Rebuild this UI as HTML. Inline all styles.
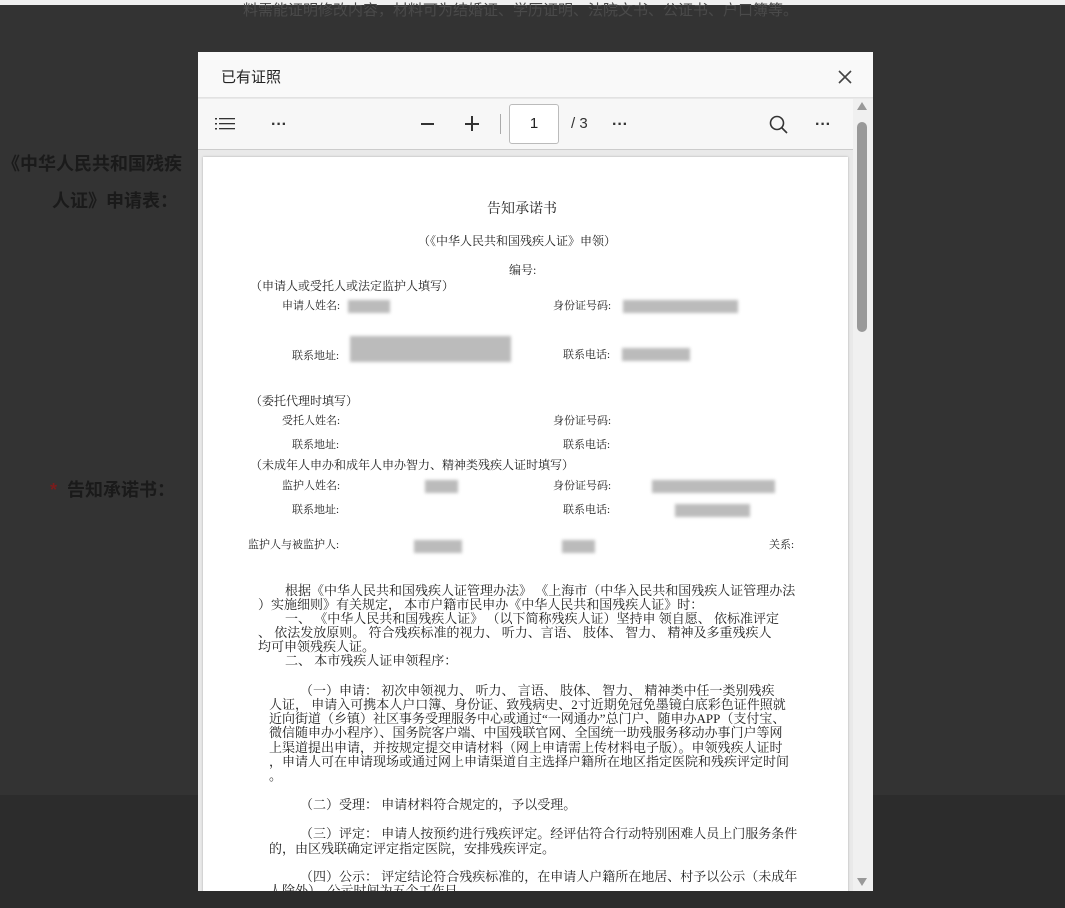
<!DOCTYPE html>
<html><head><meta charset="utf-8">
<style>
*{margin:0;padding:0;box-sizing:border-box}
body{width:1065px;height:908px;overflow:hidden;background:#333;font-family:"Liberation Sans","Noto Sans CJK SC",sans-serif;position:relative}
.a{position:absolute;white-space:nowrap}
.t{position:absolute;white-space:nowrap;font-family:"Liberation Serif","Noto Serif CJK SC",serif;font-size:13px;line-height:16px;color:#222}
.b{position:absolute;background:#bbb;filter:blur(1.5px)}
</style></head><body>
<div class="a" style="left:0;top:0;width:1065px;height:5px;background:#f0f0f0"></div>
<div class="a" style="left:0;top:795px;width:1065px;height:113px;background:#2c2c2c"></div>
<div class="a" style="left:243px;top:2px;font-size:15px;color:#4a4a4a;line-height:18px">料需能证明修改内容，材料可为结婚证、学历证明、法院文书、公证书、户口簿等。</div>
<div class="a" style="left:2px;top:150px;font-size:18px;font-weight:bold;color:#1a1a1a">《中华人民共和国残疾</div>
<div class="a" style="left:52px;top:187px;font-size:18px;font-weight:bold;color:#1a1a1a">人证》申请表：</div>
<div class="a" style="left:50px;top:476px;font-size:18px;font-weight:bold;color:#1a1a1a"><span style="color:#7a1c1c">*</span>&nbsp; 告知承诺书：</div>

<div class="a" style="left:198px;top:52px;width:675px;height:839px;background:#e9e9e9;overflow:hidden">
 <div class="a" style="left:0;top:0;width:675px;height:46px;background:#f9f9f9;border-bottom:1px solid #e2e2e2"></div>
 <div class="a" style="left:23px;top:14px;font-size:15px;color:#222">已有证照</div>
 <svg class="a" style="left:640px;top:18px" width="14" height="14"><path d="M1 1L13 13M13 1L1 13" stroke="#444" stroke-width="1.6"/></svg>
 <div class="a" style="left:0;top:47px;width:675px;height:51px;background:#f7f7f7;border-bottom:1px solid #ccc"></div>
 <svg class="a" style="left:17px;top:65px" width="22" height="14"><g fill="#333"><rect x="0" y="1" width="2" height="1.5"/><rect x="0" y="6" width="2" height="1.5"/><rect x="0" y="11" width="2" height="1.5"/><rect x="4" y="1" width="16" height="1.3"/><rect x="4" y="6" width="16" height="1.3"/><rect x="4" y="11" width="16" height="1.3"/></g></svg>
 <div class="a" style="left:73px;top:64px;font-size:16px;color:#333;font-weight:bold">···</div>
 <div class="a" style="left:223px;top:71px;width:13px;height:1.5px;background:#333"></div>
 <div class="a" style="left:267px;top:71px;width:14px;height:1.5px;background:#333"></div>
 <div class="a" style="left:273px;top:64px;width:1.5px;height:15px;background:#333"></div>
 <div class="a" style="left:302px;top:62px;width:1px;height:20px;background:#aaa"></div>
 <div class="a" style="left:311px;top:52px;width:50px;height:40px;border:1px solid #bbb;border-radius:3px;background:#fff;font-size:15px;text-align:center;line-height:38px;color:#222">1</div>
 <div class="a" style="left:373px;top:63px;font-size:15px;color:#333">/ 3</div>
 <div class="a" style="left:414px;top:64px;font-size:16px;color:#333;font-weight:bold">···</div>
 <svg class="a" style="left:571px;top:63px" width="20" height="20"><circle cx="8" cy="8" r="6.5" fill="none" stroke="#333" stroke-width="1.6"/><path d="M13 13L18 18" stroke="#333" stroke-width="1.6"/></svg>
 <div class="a" style="left:617px;top:64px;font-size:16px;color:#333;font-weight:bold">···</div>
 <div class="a" style="left:655px;top:47px;width:20px;height:792px;background:#f0f0f0"></div>
 <div class="a" style="left:659px;top:50px;width:0;height:0;border-left:5px solid transparent;border-right:5px solid transparent;border-bottom:8px solid #999"></div>
 <div class="a" style="left:659px;top:70px;width:10px;height:210px;background:#999;border-radius:5px"></div>
 <div class="a" style="left:659px;top:826px;width:0;height:0;border-left:5px solid transparent;border-right:5px solid transparent;border-top:8px solid #999"></div>
 <div class="a" style="left:5px;top:105px;width:645px;height:740px;background:#fff;box-shadow:0 0 2px #aaa"></div>
</div>

<div class="t" style="left:487px;top:202px;font-size:14px">告知承诺书</div>
<div class="t" style="left:418px;top:233px;font-size:12px">（《中华人民共和国残疾人证》申领）</div>
<div class="t" style="left:509px;top:262px;font-size:12px">编号:</div>
<div class="t" style="left:250px;top:278px;font-size:12px">（申请人或受托人或法定监护人填写）</div>
<div class="t" style="left:282px;top:298px;font-size:11px">申请人姓名:</div>
<div class="t" style="left:553px;top:298px;font-size:11px">身份证号码:</div>
<div class="b" style="left:348px;top:300px;width:42px;height:13px"></div>
<div class="b" style="left:623px;top:300px;width:115px;height:13px"></div>
<div class="t" style="left:292px;top:348px;font-size:11px">联系地址:</div>
<div class="t" style="left:563px;top:347px;font-size:11px">联系电话:</div>
<div class="b" style="left:350px;top:336px;width:161px;height:26px"></div>
<div class="b" style="left:622px;top:348px;width:68px;height:13px"></div>
<div class="t" style="left:250px;top:393px;font-size:12px">（委托代理时填写）</div>
<div class="t" style="left:282px;top:413px;font-size:11px">受托人姓名:</div>
<div class="t" style="left:553px;top:413px;font-size:11px">身份证号码:</div>
<div class="t" style="left:292px;top:437px;font-size:11px">联系地址:</div>
<div class="t" style="left:563px;top:437px;font-size:11px">联系电话:</div>
<div class="t" style="left:250px;top:457px;font-size:12px">（未成年人申办和成年人申办智力、精神类残疾人证时填写）</div>
<div class="t" style="left:282px;top:478px;font-size:11px">监护人姓名:</div>
<div class="t" style="left:553px;top:478px;font-size:11px">身份证号码:</div>
<div class="b" style="left:425px;top:480px;width:33px;height:13px"></div>
<div class="b" style="left:652px;top:480px;width:123px;height:13px"></div>
<div class="t" style="left:292px;top:502px;font-size:11px">联系地址:</div>
<div class="t" style="left:563px;top:502px;font-size:11px">联系电话:</div>
<div class="b" style="left:675px;top:504px;width:75px;height:13px"></div>
<div class="t" style="left:248px;top:537px;font-size:11px">监护人与被监护人:</div>
<div class="b" style="left:414px;top:540px;width:48px;height:13px"></div>
<div class="b" style="left:562px;top:540px;width:33px;height:13px"></div>
<div class="t" style="left:769px;top:537px;font-size:11px">关系:</div>

<div class="t" style="left:285px;top:583px">根据《中华人民共和国残疾人证管理办法》 《上海市（中华入民共和国残疾人证管理办法</div>
<div class="t" style="left:258px;top:597px">）实施细则》有关规定， 本市户籍市民申办《中华人民共和国残疾人证》时：</div>
<div class="t" style="left:285px;top:611px">一、 《中华人民共和国残疾人证》 （以下简称残疾人证）坚持申 领自愿、 依标准评定</div>
<div class="t" style="left:258px;top:625px">、 依法发放原则。 符合残疾标准的视力、 听力、言语、 肢体、 智力、 精神及多重残疾人</div>
<div class="t" style="left:258px;top:639px">均可申领残疾人证。</div>
<div class="t" style="left:285px;top:653px">二、 本市残疾人证申领程序：</div>
<div class="t" style="left:300px;top:683px">（一）申请： 初次申领视力、 听力、 言语、 肢体、 智力、 精神类中任一类别残疾</div>
<div class="t" style="left:269px;top:697px">人证， 申请入可携本人户口簿、身份证、致残病史、2寸近期免冠免墨镜白底彩色证件照就</div>
<div class="t" style="left:269px;top:711px">近向街道（乡镇）社区事务受理服务中心或通过“一网通办”总门户、随申办APP（支付宝、</div>
<div class="t" style="left:269px;top:725px">微信随申办小程序）、国务院客户端、中国残联官网、全国统一助残服务移动办事门户等网</div>
<div class="t" style="left:269px;top:740px">上渠道提出申请，并按规定提交申请材料（网上申请需上传材料电子版）。申领残疾人证时</div>
<div class="t" style="left:269px;top:754px">，申请人可在申请现场或通过网上申请渠道自主选择户籍所在地区指定医院和残疾评定时间</div>
<div class="t" style="left:269px;top:768px">。</div>
<div class="t" style="left:300px;top:797px">（二）受理： 申请材料符合规定的，予以受理。</div>
<div class="t" style="left:300px;top:826px">（三）评定： 申请人按预约进行残疾评定。经评估符合行动特别困难人员上门服务条件</div>
<div class="t" style="left:269px;top:841px">的，由区残联确定评定指定医院，安排残疾评定。</div>
<div class="t" style="left:300px;top:869px">（四）公示： 评定结论符合残疾标准的，在申请人户籍所在地居、村予以公示（未成年</div>
<div class="t" style="left:269px;top:883px;height:8px;overflow:hidden">人除外），公示时间为五个工作日。</div>
</body></html>
